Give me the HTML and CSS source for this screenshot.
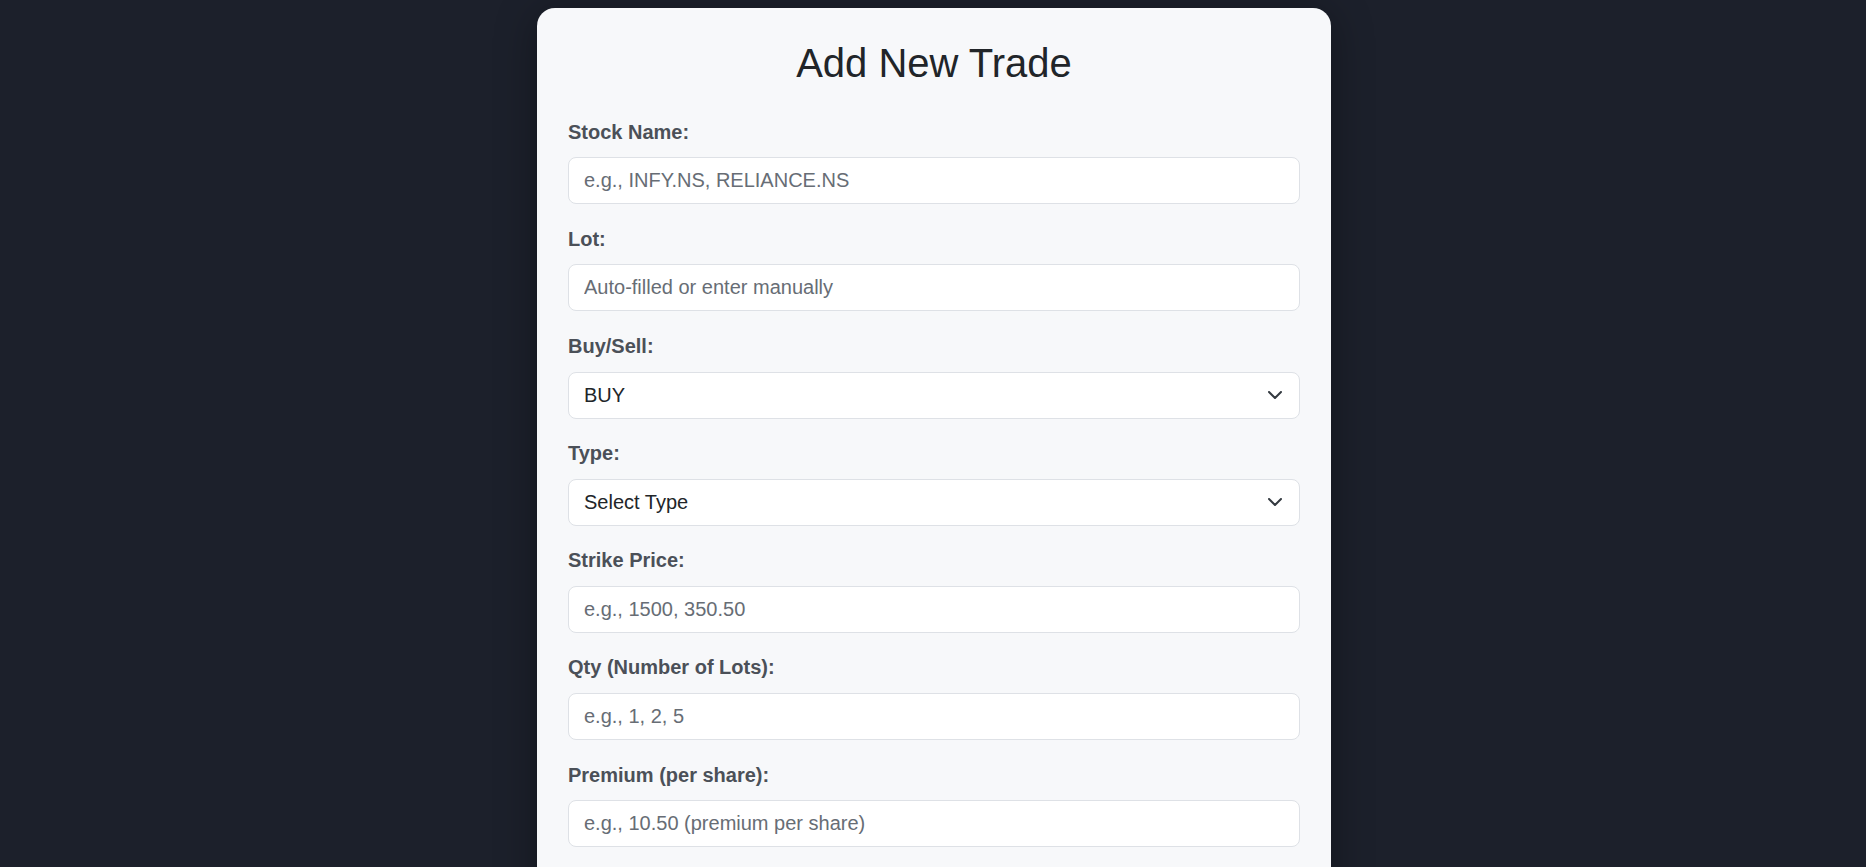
FILE: index.html
```html
<!DOCTYPE html>
<html lang="en">
<head>
<meta charset="utf-8">
<title>Add New Trade</title>
<link rel="stylesheet" href="styles.css">
</head>
<body>
<main class="page">
  <section class="card">
    <h1 class="title">Add New Trade</h1>
    <form class="form">
      <div class="group">
        <label class="label" for="stock">Stock Name:</label>
        <input class="field" id="stock" type="text" placeholder="e.g., INFY.NS, RELIANCE.NS">
      </div>
      <div class="group">
        <label class="label" for="lot">Lot:</label>
        <input class="field" id="lot" type="text" placeholder="Auto-filled or enter manually">
      </div>
      <div class="group">
        <label class="label" for="side">Buy/Sell:</label>
        <div class="select-wrap">
          <select class="field select" id="side">
            <option>BUY</option>
            <option>SELL</option>
          </select>
          <svg class="chevron" width="14" height="8" viewBox="0 0 14 8" aria-hidden="true"><path d="M1 1 L7 7 L13 1" fill="none" stroke="#343a40" stroke-width="2" stroke-linecap="round" stroke-linejoin="round"/></svg>
        </div>
      </div>
      <div class="group">
        <label class="label" for="type">Type:</label>
        <div class="select-wrap">
          <select class="field select" id="type">
            <option>Select Type</option>
            <option>CE</option>
            <option>PE</option>
            <option>FUT</option>
          </select>
          <svg class="chevron" width="14" height="8" viewBox="0 0 14 8" aria-hidden="true"><path d="M1 1 L7 7 L13 1" fill="none" stroke="#343a40" stroke-width="2" stroke-linecap="round" stroke-linejoin="round"/></svg>
        </div>
      </div>
      <div class="group">
        <label class="label" for="strike">Strike Price:</label>
        <input class="field" id="strike" type="text" placeholder="e.g., 1500, 350.50">
      </div>
      <div class="group">
        <label class="label" for="qty">Qty (Number of Lots):</label>
        <input class="field" id="qty" type="text" placeholder="e.g., 1, 2, 5">
      </div>
      <div class="group">
        <label class="label" for="premium">Premium (per share):</label>
        <input class="field" id="premium" type="text" placeholder="e.g., 10.50 (premium per share)">
      </div>
    </form>
  </section>
</main>
</body>
</html>
```

FILE: styles.css
```css
html {
  scrollbar-width: none;
}
html::-webkit-scrollbar {
  display: none;
}
body {
  margin: 0;
  background: #1c202b;
  font-family: "Liberation Sans", Arial, sans-serif;
}
.page {
  padding-top: 8px;
  display: flex;
  justify-content: center;
}
.card {
  width: 794px;
  box-sizing: border-box;
  background: #f7f8fa;
  border-radius: 18px;
  padding: 31px 31px 60px;
  box-shadow: 0 6px 40px rgba(0, 0, 0, 0.35);
  margin-left: 2px;
}
.title {
  margin: 1px 0 34.5px;
  text-align: center;
  font-size: 40px;
  font-weight: 400;
  line-height: 46px;
  color: #212529;
}
.form {
  display: flex;
  flex-direction: column;
}
.group {
  display: flex;
  flex-direction: column;
  margin-bottom: 23.5px;
}
.label {
  display: block;
  font-size: 20px;
  line-height: 23px;
  font-weight: 700;
  color: #4b5058;
  margin-bottom: 13.7px;
}
.field {
  box-sizing: border-box;
  width: 100%;
  height: 47px;
  margin: 0;
  padding: 0 15px;
  border: 1px solid #dee1e6;
  border-radius: 8px;
  background: #ffffff;
  font-family: "Liberation Sans", Arial, sans-serif;
  font-size: 20px;
  color: #212529;
  outline: none;
}
.field::placeholder {
  color: #676d75;
  opacity: 1;
}
.select-wrap {
  position: relative;
}
.select {
  appearance: none;
  -webkit-appearance: none;
}
.chevron {
  position: absolute;
  right: 18px;
  top: 50%;
  transform: translateY(-50%);
  pointer-events: none;
}
```
